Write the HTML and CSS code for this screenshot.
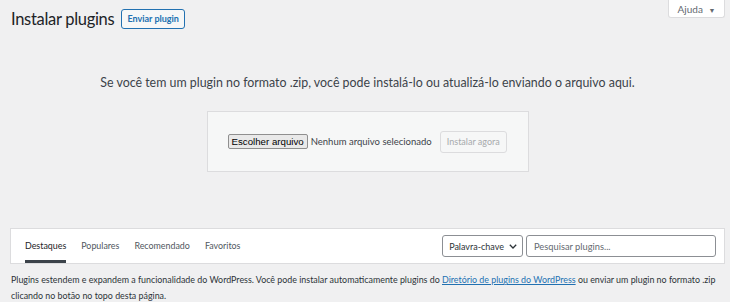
FILE: index.html
```html
<!DOCTYPE html>
<html lang="pt-BR">
  <head>
    <meta charset="UTF-8" />
    <title>Instalar plugins</title>
    <link rel="stylesheet" href="styles.css">
  </head>
  <body>
    <div class="wrap">
      <header class="topo">
        <div class="titulo">
          <h1>Instalar plugins</h1>
          <a class="acao-titulo" href="#">Enviar plugin</a>
        </div>
        <button class="aba-ajuda">Ajuda <span class="seta">&#9660;</span></button>
      </header>

      <section class="envio">
        <p class="envio-texto">Se você tem um plugin no formato .zip, você pode instalá-lo ou atualizá-lo enviando o arquivo aqui.</p>
        <form class="envio-form">
          <span class="arquivo-botao">Escolher arquivo</span>
          <span class="arquivo-nome">Nenhum arquivo selecionado</span>
          <button class="instalar" disabled>Instalar agora</button>
        </form>
      </section>

      <div class="filtros">
        <ul class="abas">
          <li class="atual">Destaques</li>
          <li>Populares</li>
          <li>Recomendado</li>
          <li>Favoritos</li>
        </ul>
        <div class="busca">
          <span class="tipo">Palavra-chave
            <svg width="8" height="5" viewBox="0 0 8 5"><path d="M0.8 0.8l3.2 3.2 3.2-3.2" fill="none" stroke="#2c3338" stroke-width="1.3"/></svg>
          </span>
          <span class="campo">Pesquisar plugins...</span>
        </div>
      </div>

      <p class="nota">Plugins estendem e expandem a funcionalidade do WordPress. Você pode instalar automaticamente plugins do <a href="#">Diretório de plugins do WordPress</a> ou enviar um plugin no formato .zip clicando no botão no topo desta página.</p>
    </div>
  </body>
</html>
```

FILE: styles.css
```css
body {
  margin: 0;
  background-color: #f0f0f1;
  color: #3c434a;
  font-family: Lato, "Open Sans", sans-serif;
  font-size: 11px;
}
.wrap {
  padding: 0 5px 0 10px;
}
.topo {
  display: flex;
  justify-content: space-between;
  align-items: flex-start;
}
.titulo {
  display: flex;
  align-items: center;
  gap: 7px;
  padding-top: 6px;
}
h1 {
  margin: 0 0 0 1px;
  font-size: 16.5px;
  font-weight: 400;
  letter-spacing: -0.3px;
  line-height: 26px;
  color: #1d2327;
}
.acao-titulo {
  display: inline-block;
  padding: 0 5px;
  line-height: 18px;
  border: 1px solid #2271b1;
  border-radius: 3px;
  background-color: #f6f7f7;
  color: #2271b1;
  font-size: 9px;
  font-weight: 700;
  text-decoration: none;
}
.aba-ajuda {
  width: 57px;
  height: 18px;
  padding: 0;
  border: 1px solid #dcdcde;
  border-top: none;
  border-radius: 0 0 3px 3px;
  background-color: #fff;
  color: #646970;
  font-family: inherit;
  font-size: 10px;
}
.seta {
  font-size: 7px;
  margin-left: 3px;
}
.envio {
  text-align: center;
}
.envio-texto {
  margin: 41px 0 0;
  font-size: 12.4px;
  line-height: 20px;
  color: #3c434a;
}
.envio-form {
  display: inline-flex;
  align-items: center;
  width: 322px;
  height: 61px;
  box-sizing: border-box;
  margin-top: 18px;
  padding-left: 20px;
  border: 1px solid #dcdcde;
  background-color: #f6f7f7;
  white-space: nowrap;
}
.arquivo-botao {
  padding: 0 3px;
  line-height: 13px;
  border: 1px solid #8f8f8f;
  border-radius: 2px;
  background-color: #e9e9e9;
  color: #000;
  font-family: "Liberation Sans", Arial, sans-serif;
  font-size: 9.7px;
}
.arquivo-nome {
  margin-left: 3px;
  color: #3c434a;
  font-size: 9.5px;
}
.instalar {
  margin-left: 8px;
  width: 67px;
  height: 22px;
  padding: 0;
  border: 1px solid #dcdcde;
  border-radius: 3px;
  background-color: #f6f7f7;
  color: #a7aaad;
  font-family: inherit;
  font-size: 9px;
}
.filtros {
  display: flex;
  justify-content: space-between;
  align-items: center;
  height: 36px;
  box-sizing: border-box;
  margin-top: 56px;
  padding: 0 8px 0 14px;
  border: 1px solid #dcdcde;
  background-color: #fff;
}
.abas {
  display: flex;
  gap: 15px;
  margin: 0;
  padding: 0;
  list-style: none;
  align-self: stretch;
}
.abas li {
  display: flex;
  align-items: center;
  padding-top: 1px;
  color: #50575e;
  font-size: 8.9px;
  border-bottom: 3px solid transparent;
}
.abas .atual {
  color: #1d2327;
  border-bottom-color: #3c434a;
}
.busca {
  display: flex;
  gap: 3px;
}
.tipo {
  display: flex;
  align-items: center;
  gap: 5px;
  height: 22px;
  box-sizing: border-box;
  padding: 0 5px 0 6px;
  border: 1px solid #8c8f94;
  border-radius: 3px;
  color: #2c3338;
  font-size: 9px;
}
.campo {
  display: flex;
  align-items: center;
  width: 190px;
  height: 22px;
  padding: 0 7px;
  border: 1px solid #8c8f94;
  border-radius: 3px;
  box-sizing: border-box;
  color: #646970;
  font-size: 9.3px;
}
.nota {
  margin: 8px 0 0 1px;
  font-size: 8.9px;
  line-height: 16px;
  color: #2c3338;
}
.nota a {
  color: #2271b1;
}
```
